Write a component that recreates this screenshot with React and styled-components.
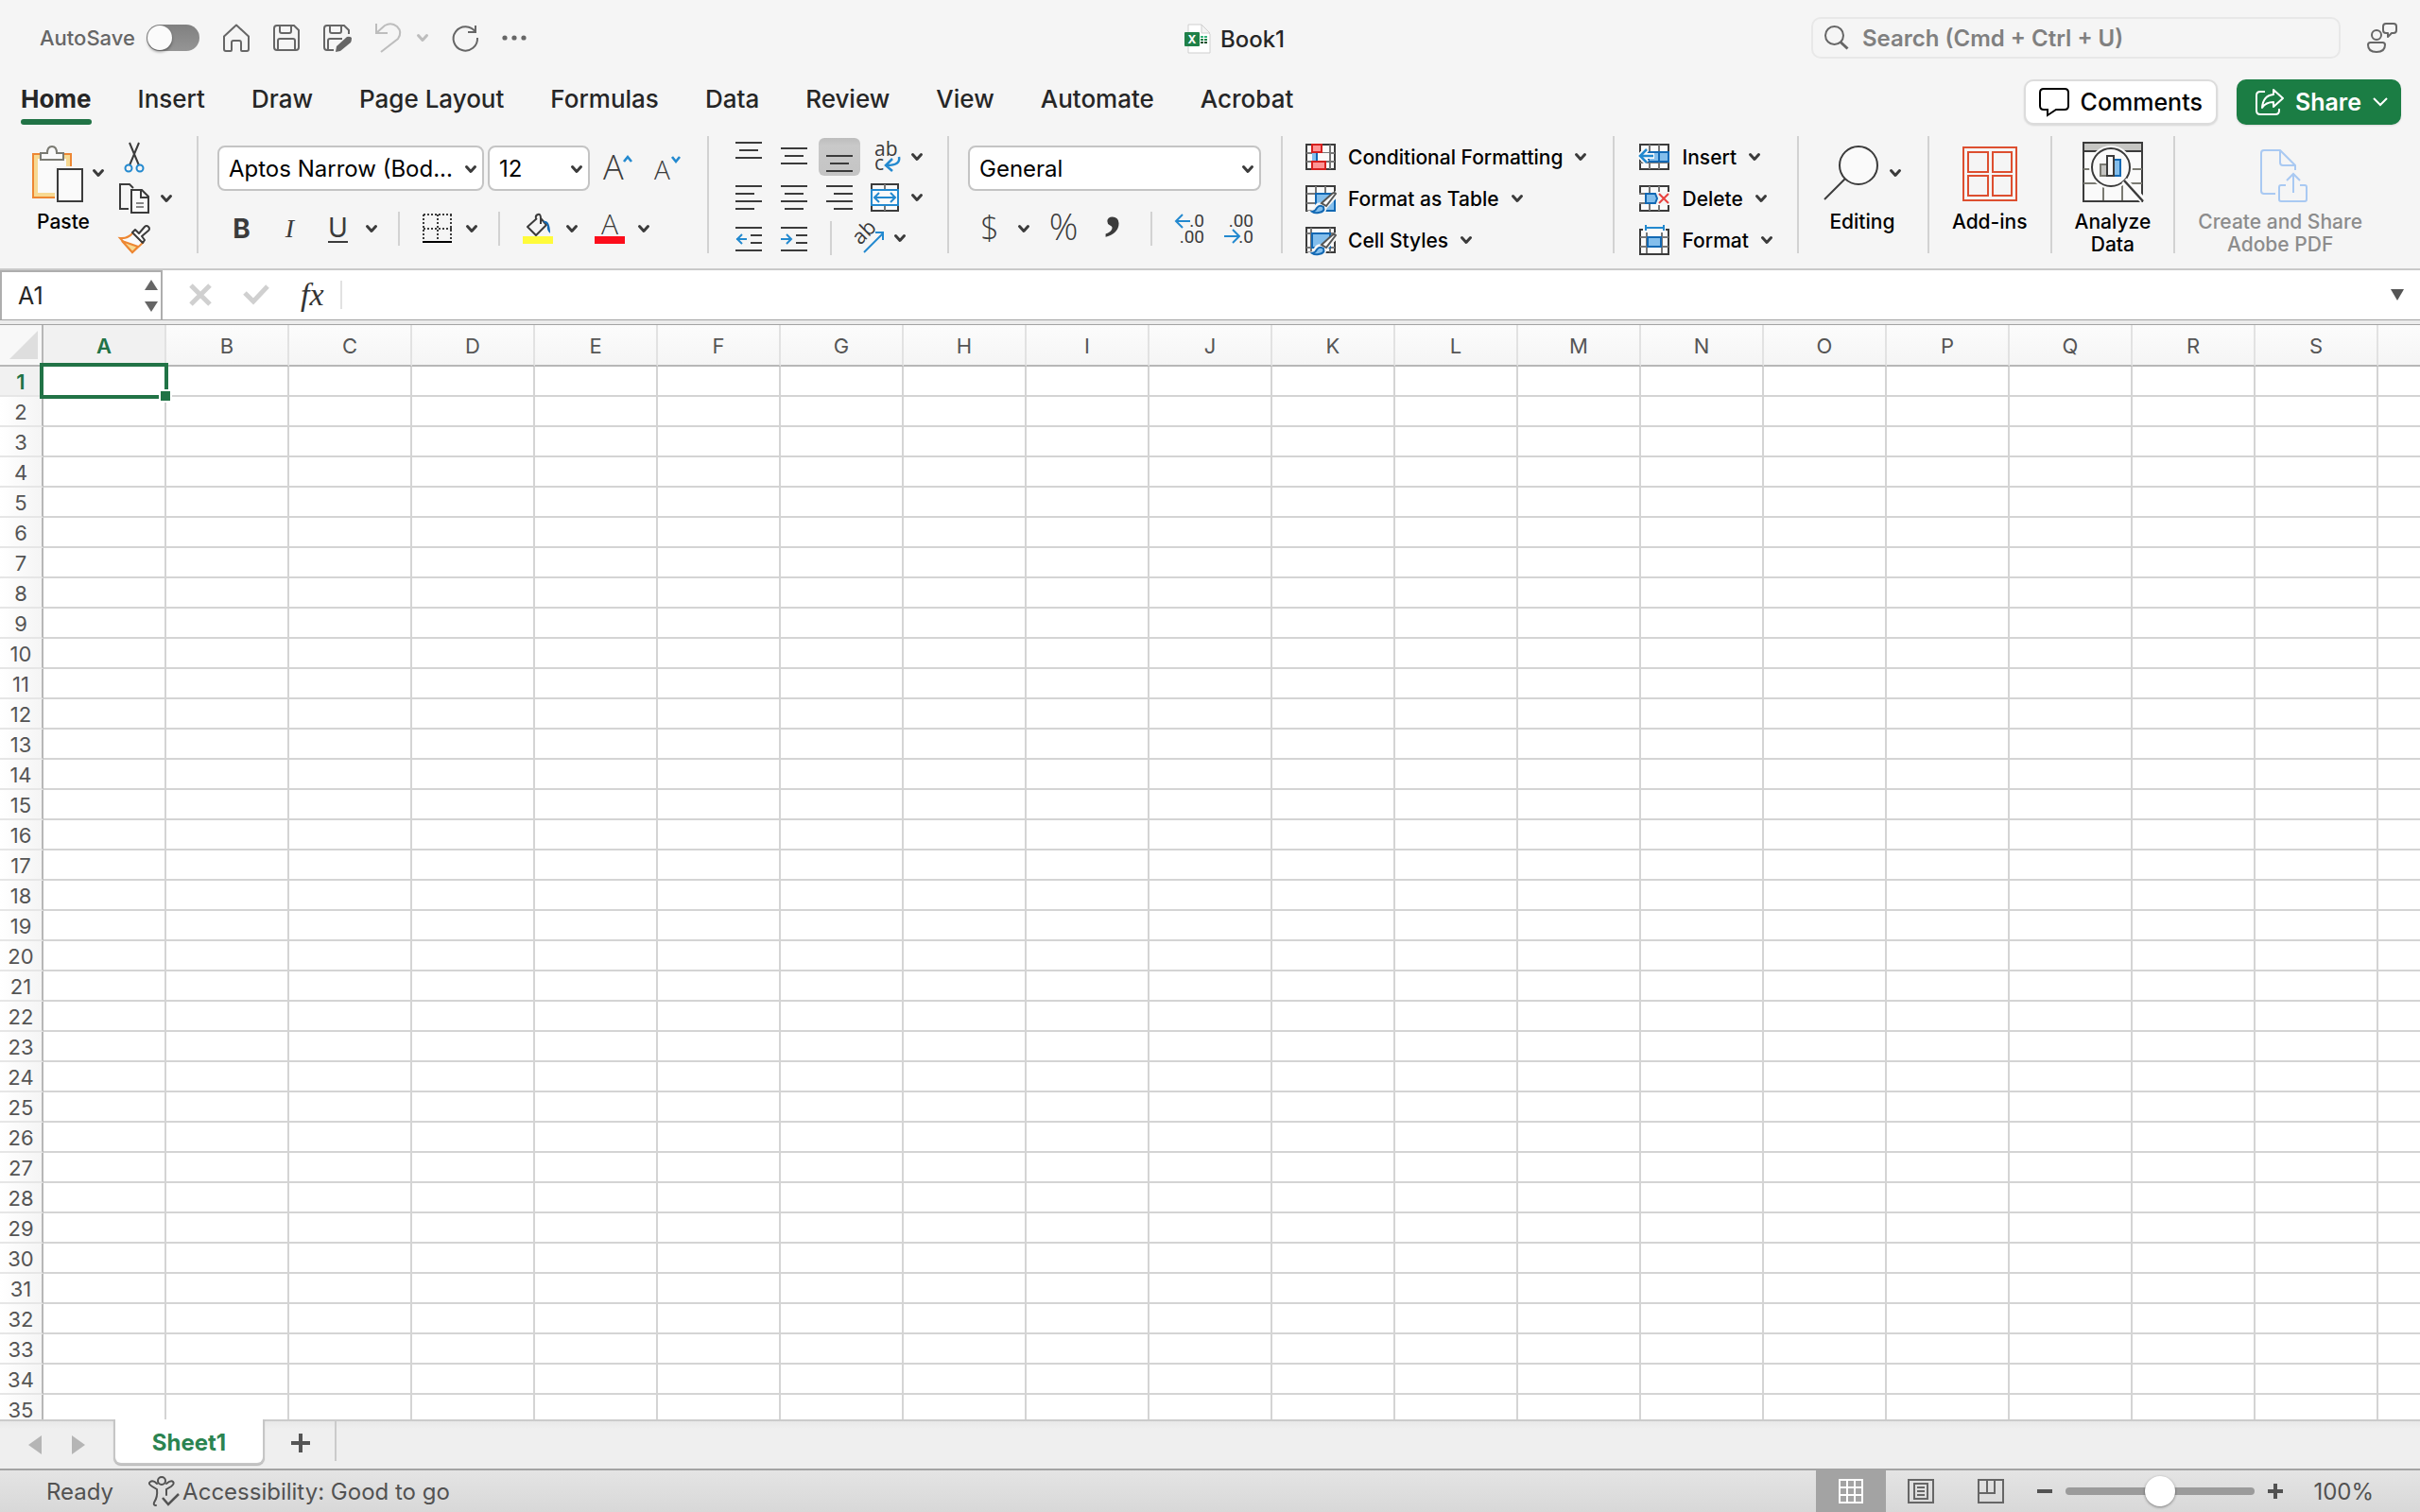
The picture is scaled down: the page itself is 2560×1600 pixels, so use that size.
import React, { useState } from 'react';
import styled, { createGlobalStyle, css } from 'styled-components';

const GlobalStyle = createGlobalStyle`
  * {
    box-sizing: border-box;
  }

  body {
    margin: 0;
    background-color: #f5f5f5;
    font-family: Inter, "Liberation Sans", sans-serif;
    color: #262626;
  }

  button, input, select {
    font-family: inherit;
    color: inherit;
  }

  svg {
    display: block;
    flex: none;
    overflow: visible;
  }
`;

const Window = styled.div`
  height: 100vh;
  display: flex;
  flex-direction: column;
  overflow: hidden;
`;

const PlainButton = styled.button`
  display: flex;
  align-items: center;
  justify-content: center;
  padding: 0;
  border: 0;
  background: none;
  white-space: nowrap;
`;

/* ---------- title bar ---------- */

const TitleBar = styled.header`
  flex: none;
  height: 80px;
  padding: 0 24px 0 42px;
  display: grid;
  grid-template-columns: 1fr auto 1fr;
  align-items: center;
`;

const QuickAccess = styled.div`
  display: flex;
  align-items: center;
  gap: 25px;
  color: #666;
`;

const AutoSave = styled.label`
  display: flex;
  align-items: center;
  gap: 12px;
  font-size: 22px;
  font-weight: 500;
`;

const Toggle = styled.input`
  appearance: none;
  width: 56px;
  height: 28px;
  margin: 0;
  border-radius: 14px;
  background: linear-gradient(#808080, #959595);
  display: flex;

  &::before {
    content: '';
    width: 26px;
    height: 26px;
    margin: 1px;
    border-radius: 50%;
    background-color: #fbfbfb;
    box-shadow: 0 2px 3px #00000060;
  }

  &:checked {
    background: #217346;
    justify-content: flex-end;
  }
`;

const UndoGroup = styled.div`
  display: flex;
  align-items: center;
  gap: 16px;
  color: #bdbdbd;
`;

const DocTitle = styled.h1`
  display: flex;
  align-items: center;
  gap: 10px;
  margin: 0;
  padding: 2px 0 0 34px;
  font-size: 24px;
  font-weight: 500;
`;

const TitleRight = styled.div`
  display: flex;
  align-items: center;
  justify-content: flex-end;
  gap: 28px;
  color: #666;
`;

const SearchBox = styled.label`
  width: 560px;
  height: 44px;
  padding: 0 12px;
  display: flex;
  align-items: center;
  gap: 14px;
  border: 2px solid #e8e8e8;
  border-radius: 10px;

  input {
    flex: 1;
    min-width: 0;
    padding: 0;
    border: 0;
    background: none;
    font-size: 24px;
    font-weight: 600;
  }

  input::placeholder {
    color: #808080;
    opacity: 1;
  }
`;

/* ---------- tabs ---------- */

const TabRow = styled.div`
  flex: none;
  height: 56px;
  padding: 0 20px 0 22px;
  display: flex;
  align-items: flex-start;
  justify-content: space-between;
`;

const Tabs = styled.nav`
  display: flex;
  gap: 49px;
`;

const Tab = styled.a`
  height: 52px;
  padding-top: 8px;
  line-height: 34px;
  font-size: 26px;
  font-weight: ${({ $active }) => ($active ? 700 : 500)};
  color: #262626;
  text-decoration: none;
  white-space: nowrap;

  &::after {
    content: '';
    display: block;
    height: 6px;
    margin-top: 4px;
    border-radius: 3px;
    background-color: ${({ $active }) => ($active ? '#217346' : 'transparent')};
  }
`;

const TabActions = styled.div`
  display: flex;
  gap: 20px;
  padding-top: 4px;
`;

const ActionButton = styled(PlainButton)`
  height: 48px;
  gap: 12px;
  padding: 0 14px;
  border-radius: 10px;
  border: 2px solid #dcdcdc;
  background-color: #fff;
  box-shadow: 0 1px 2px #00000020;
  color: #000;
  font-size: 25px;
  font-weight: 500;

  ${({ $primary }) => $primary && css`
    padding: 0 12px 0 18px;
    border-color: #1b7d44;
    background-color: #1b7d44;
    color: #fff;
    font-weight: 600;
  `}
`;

/* ---------- ribbon ---------- */

const Ribbon = styled.section`
  flex: none;
  min-height: 148px;
  padding-top: 8px;
  display: flex;
  align-items: flex-start;
  color: #3b3b3b;
`;

const Divider = styled.span`
  flex: none;
  width: 2px;
  height: 124px;
  background-color: #d2d2d2;
`;

const SmallDivider = styled(Divider)`
  height: 36px;
  margin: 0 24px 0 ${({ $left = 22 }) => $left}px;
`;

const Group = styled.div`
  flex: none;
  display: flex;
  align-items: flex-start;
  gap: 16px;
  padding: 0 ${({ $right = 26 }) => $right}px 0 ${({ $left = 24 }) => $left}px;
`;

const Stack = styled.div`
  display: flex;
  flex-direction: column;
  gap: ${({ $gap }) => $gap}px;
  padding-top: ${({ $top }) => $top}px;
`;

const Row = styled.div`
  display: flex;
  align-items: center;
  gap: ${({ $gap = 0 }) => $gap}px;
  min-height: ${({ $height = 0 }) => $height}px;
  padding-left: ${({ $inset = 0 }) => $inset}px;
`;

const Split = styled(PlainButton)`
  gap: ${({ $gap = 14 }) => $gap}px;
  justify-content: flex-start;
`;

const Tile = styled(PlainButton)`
  flex-direction: column;
  padding-top: 6px;
  font-size: 21px;
  font-weight: 500;
  line-height: 24px;
  color: ${({ disabled }) => (disabled ? '#8c8c8c' : '#000')};

  > span:first-child {
    display: flex;
    align-items: flex-end;
    height: 64px;
    margin-bottom: 9px;
  }
`;

const TileArrow = styled.span`
  display: flex;
  padding: 0 0 27px 10px;
  color: #3b3b3b;
`;

const SelectWrapper = styled.div`
  position: relative;
  width: ${({ $width }) => $width}px;

  select {
    appearance: none;
    display: block;
    width: 100%;
    height: 48px;
    padding: 0 24px 0 10px;
    border: 2px solid #c4c4c4;
    border-radius: 8px;
    background-color: #fff;
    color: #000;
    font-size: 24px;
    font-weight: 400;
  }

  svg {
    position: absolute;
    right: 8px;
    top: 21px;
    pointer-events: none;
  }
`;

const LetterButton = styled(PlainButton)`
  width: 51px;
  height: 36px;
  font-size: 28px;
  font-weight: ${({ $weight = 400 }) => $weight};
  font-style: ${({ $italic }) => ($italic ? 'italic' : 'normal')};
  font-family: ${({ $italic }) => ($italic ? '"Liberation Serif", serif' : 'inherit')};

  span {
    line-height: 28px;
    border-bottom: ${({ $underline }) => ($underline ? '2px solid #3b3b3b' : '0')};
  }
`;

const SquareButton = styled(PlainButton)`
  width: 44px;
  height: 40px;
  border-radius: 6px;
  background: ${({ $pressed }) => ($pressed ? 'linear-gradient(#bdbdbd, #c9c9c9 20%, #c4c4c4)' : 'none')};
`;

const ListButton = styled(PlainButton)`
  height: 32px;
  gap: 13px;
  justify-content: flex-start;
  font-size: 21px;
  font-weight: 500;
  color: #000;

  svg {
    color: #3b3b3b;
  }
`;

/* ---------- formula bar ---------- */

const FormulaBar = styled.div`
  flex: none;
  height: 54px;
  display: flex;
  border-top: 2px solid #c9c9c9;
  background-color: #fff;
`;

const NameBox = styled.div`
  width: 172px;
  padding: 0 3px 0 17px;
  display: flex;
  align-items: center;
  border: 2px solid #aeaeae;
  border-bottom: 0;

  input {
    flex: 1;
    min-width: 0;
    padding: 0;
    border: 0;
    font-size: 25px;
  }
`;

const Spinner = styled.div`
  display: flex;
  flex-direction: column;
  gap: 12px;
`;

const FormulaTools = styled.div`
  display: flex;
  align-items: center;
  gap: 33px;
  padding: 0 17px 0 28px;
`;

const FxButton = styled(PlainButton)`
  font: italic 400 34px "Liberation Serif", serif;
  color: #333;
`;

const FormulaInput = styled.input`
  flex: 1;
  min-width: 0;
  height: 30px;
  align-self: center;
  border: 0;
  border-left: 2px solid #e2e2e2;
  padding: 0 14px;
  font-size: 24px;
`;

const ExpandButton = styled(PlainButton)`
  width: 48px;
`;

const Splitter = styled.div`
  flex: none;
  height: 6px;
  border-top: 1px solid #a3a3a3;
  border-bottom: 1px solid #a3a3a3;
  background-color: #ececec;
`;

/* ---------- grid ---------- */

const SheetArea = styled.main`
  flex: 1;
  min-height: 0;
  overflow: hidden;
  background-color: #fff;
`;

const Sheet = styled.table`
  table-layout: fixed;
  width: 100%;
  border-spacing: 0;
  font-size: 22px;

  th, td {
    padding: 0;
  }

  td {
    height: 32px;
    border-right: 2px solid #d4d4d4;
    border-bottom: 2px solid #d4d4d4;
  }

  tr > :last-child {
    border-right: 0;
  }
`;

const Corner = styled.th`
  width: 46px;
  border-right: 2px solid #b7b7b7;
  border-bottom: 2px solid #b7b7b7;
  background-color: #f8f8f8;

  svg {
    margin: 0 0 0 10px;
  }
`;

const ColumnHeader = styled.th`
  width: ${({ $last }) => ($last ? 'auto' : '130px')};
  height: 44px;
  border-right: 2px solid #e2e2e2;
  border-bottom: 2px solid #b7b7b7;
  background: ${({ $selected }) => ($selected ? '#f1f1f1' : 'linear-gradient(#fcfcfc, #f5f5f5)')};
  color: ${({ $selected }) => ($selected ? '#217346' : '#555')};
  font-weight: ${({ $selected }) => ($selected ? 600 : 400)};

  && {
    padding-top: 2px;
  }
`;

const RowHeader = styled.th`
  height: 32px;
  border-right: 2px solid #b7b7b7;
  border-bottom: 2px solid #e6e6e6;
  background: ${({ $selected }) => ($selected ? '#f1f1f1' : 'linear-gradient(90deg, #fff, #f5f5f5)')};
  color: ${({ $selected }) => ($selected ? '#217346' : '#555')};
  font-weight: ${({ $selected }) => ($selected ? 600 : 400)};
  line-height: 26px;

  && {
    padding: 3px 0 1px;
  }
`;

const ActiveCell = styled.td`
  position: relative;
`;

const Selection = styled.span`
  position: absolute;
  inset: -4px;
  border: 4px solid #217346;

  &::after {
    content: '';
    position: absolute;
    right: -6px;
    bottom: -6px;
    width: 10px;
    height: 10px;
    background-color: #217346;
    box-shadow: 0 0 0 2px #fff;
  }
`;

/* ---------- bottom bars ---------- */

const SheetBar = styled.div`
  flex: none;
  height: 52px;
  padding-left: 28px;
  display: flex;
  align-items: flex-start;
  border-top: 2px solid #cbcbcb;
  background: linear-gradient(#e8e8e8, #efefef 8px);
`;

const SheetArrows = styled.div`
  display: flex;
  gap: 30px;
  padding: 15px 30px 0 0;
`;

const SheetTab = styled(PlainButton)`
  width: 160px;
  height: 48px;
  margin-top: -2px;
  padding-top: 3px;
  border: 2px solid #c6c6c6;
  border-top: 0;
  border-radius: 0 0 8px 8px;
  background-color: #fff;
  box-shadow: 0 1px 1px #00000040;
  color: #2b8451;
  font-size: 24px;
  font-weight: 700;
`;

const AddSheet = styled(PlainButton)`
  width: 76px;
  height: 42px;
  padding: 4px 0 0 2px;
  border-right: 2px solid #cbcbcb;
  color: #555;
`;

const StatusBar = styled.footer`
  flex: none;
  height: 46px;
  padding: 0 49px;
  display: flex;
  align-items: stretch;
  border-top: 2px solid #a3a3a3;
  background: linear-gradient(#e4e4e4, #d8d8d8);
  color: #525252;
  font-size: 24px;
`;

const StatusText = styled.span`
  display: flex;
  align-items: center;
  gap: 3px;
  margin-right: 38px;

  &:last-child {
    margin-right: 0;
  }
`;

const ViewButton = styled(PlainButton)`
  width: 74px;
  background-color: ${({ $active }) => ($active ? '#a3a3a3' : 'transparent')};
  color: #666;
`;

const StatusRight = styled.div`
  display: flex;
  align-items: stretch;
  margin-left: auto;
`;

const Zoom = styled.div`
  display: flex;
  align-items: center;
  gap: 14px;
  padding: 0 32px 0 12px;
`;

const ZoomSlider = styled.input`
  appearance: none;
  width: 200px;
  height: 8px;
  margin: 0;
  border-radius: 4px;
  background-color: #9b9b9b;

  &::-webkit-slider-thumb {
    appearance: none;
    width: 32px;
    height: 32px;
    border-radius: 50%;
    background-color: #fff;
    box-shadow: 0 1px 3px #00000070;
  }
`;

/* ---------- icons ---------- */

const Icon = ({ w = 32, h = 32, children, ...rest }) => (
  <svg width={w} height={h} viewBox={`0 0 ${w} ${h}`} fill="none" stroke="currentColor" strokeWidth="2" aria-hidden="true" {...rest}>
    {children}
  </svg>
);

const Chevron = () => (
  <Icon w={12} h={8} strokeWidth="3" strokeLinecap="round" strokeLinejoin="round">
    <path d="M1.5 1.5 6 6.5 10.5 1.5" />
  </Icon>
);

const HomeIcon = () => (
  <Icon w={28} h={30}>
    <path d="M1 13.5 14 1.5 27 13.5V27q0 2-2 2h-5q-1 0-1-1v-8q0-2-2-2h-6q-2 0-2 2v8q0 1-1 1H3q-2 0-2-2z" strokeLinejoin="round" />
  </Icon>
);

const SaveIcon = () => (
  <Icon w={28} h={28}>
    <path d="M4 1h18l5 5v18q0 3-3 3H4q-3 0-3-3V4q0-3 3-3zM7 1v6q0 2 2 2h8q2 0 2-2V1M5 27V17q0-2 2-2h14q2 0 2 2v10" />
  </Icon>
);

const SaveAsIcon = () => (
  <Icon w={30} h={30}>
    <path d="M11 28H4q-3 0-3-3V5q0-3 3-3h18l5 5v4M7 2v6q0 2 2 2h8q2 0 2-2V2M5 28V18q0-2 2-2h13" />
    <path d="M13 30l1-6L25 14q3-1 5 1 0 3-1 5L18 29z" fill="currentColor" stroke="none" />
  </Icon>
);

const UndoIcon = () => (
  <Icon w={28} h={32}>
    <path d="M1 1v10h12M1 11 10 3q7-4 13 1 6 6 1 13L6 31" />
  </Icon>
);

const RedoIcon = () => (
  <Icon w={28} h={28}>
    <path d="M25 1v7h-8M25 8A12.7 12.7 0 1 0 27 14" />
  </Icon>
);

const DotsIcon = () => (
  <Icon w={26} h={6} fill="currentColor" stroke="none">
    <circle cx="3" cy="3" r="2.6" /><circle cx="13" cy="3" r="2.6" /><circle cx="23" cy="3" r="2.6" />
  </Icon>
);

const BookIcon = () => (
  <Icon w={28} h={32} stroke="none">
    <path d="M4 1h14l9 10v20H4z" fill="#fff" stroke="#cfcfcf" strokeWidth="1" />
    <path d="M18 1v9h9z" fill="#f3f3f3" stroke="#cfcfcf" strokeWidth="1" />
    <rect y="9" width="16" height="15" rx="1" fill="#1f8048" />
    <text x="8" y="21" textAnchor="middle" fontSize="12" fontWeight="700" fill="#fff">X</text>
    <path d="M17 13h3v2h-3zM21 13h3v2h-3z" fill="#33b27a" />
    <path d="M17 16h3v2h-3zM21 16h3v2h-3z" fill="#1f8048" />
    <path d="M17 19h3v2h-3zM21 19h3v2h-3z" fill="#15522f" />
  </Icon>
);

const SearchIcon = () => (
  <Icon w={26} h={26}><circle cx="10.5" cy="10.5" r="9.5" /><path d="M17 17.500l7.500 7" strokeWidth="3" /></Icon>
);

const PersonIcon = () => (
  <Icon w={32} h={32}>
    <circle cx="10" cy="13" r="5" />
    <path d="M3.500 21h13q2.500 0 2.500 2.500 0 7.500-9 7.500t-9-7.500q0-2.500 2.500-2.500zM20 1h8q3 0 3 3v4q0 3-3 3h-2l-4 4v-4h-2q-3 0-3-3V4q0-3 3-3z" strokeLinejoin="round" />
  </Icon>
);

const CommentIcon = () => (
  <Icon w={32} h={30}>
    <path d="M5 1h22q4 0 4 4v14q0 4-4 4h-9l-9 6v-6H5q-4 0-4-4V5q0-4 4-4z" />
  </Icon>
);

const ShareIcon = () => (
  <Icon w={30} h={28}>
    <path d="M10 3H5Q1 3 1 7v16q0 4 4 4h16q4 0 4-4v-2" />
    <path d="M19 1l10 9-10 9v-5q-8 0-12 6Q8 7 19 6z" strokeLinejoin="round" />
  </Icon>
);

const PasteIcon = () => (
  <Icon w={54} h={60}>
    <rect x="1" y="9" width="40" height="46" fill="#f7d992" stroke="#ed8733" />
    <path d="M6 14h30v36H6z" fill="#fafafa" stroke="none" />
    <path d="M24 22h22v36H24z" fill="#f5f5f5" stroke="none" />
    <path d="M9 15V8h7q0-7 5-7t5 7h7v7z" fill="#fafafa" stroke="#7a7a72" />
    <rect x="27" y="25" width="26" height="34" fill="#fafafa" stroke="#3b3b3b" />
  </Icon>
);

const CutIcon = () => (
  <Icon>
    <path d="M11 1 21 25M21 1 11 25" />
    <circle cx="10" cy="28" r="3.500" stroke="#2389cf" /><circle cx="22" cy="28" r="3.500" stroke="#2389cf" />
  </Icon>
);

const CopyIcon = () => (
  <Icon>
    <path d="M10 27H1V1h10l4 4" />
    <path d="M13 7h11l7 7v17H13zM23 7v8h8" fill="#fafafa" />
    <path d="M18 21h8M18 25h8" stroke="#888" />
  </Icon>
);

const BrushIcon = () => (
  <Icon>
    <path d="M15 8Q9 15 1 14l13 15 11-10z" fill="#fafafa" stroke="#ed8733" />
    <path d="M3 17l17 6-6 6z" fill="#f7d992" stroke="#ed8733" />
    <path d="M14 8l3-3 4 4 6-7q2-2 4 0t0 4l-7 6 3 4-2 3z" fill="#fafafa" strokeLinejoin="round" />
  </Icon>
);

const GrowIcon = () => (
  <Icon w={32} h={32}>
    <text x="-2" y="28" fontSize="36" fontWeight="300" fontFamily="Open Sans, sans-serif" fill="currentColor" stroke="none">A</text>
    <path d="M20 9l4-5 4 5" stroke="#2389cf" strokeWidth="2.600" />
  </Icon>
);

const ShrinkIcon = () => (
  <Icon w={28} h={32}>
    <text x="-2" y="28" fontSize="28" fontWeight="300" fontFamily="Open Sans, sans-serif" fill="currentColor" stroke="none">A</text>
    <path d="M17 4l4 5 4-5" stroke="#2389cf" strokeWidth="2.600" />
  </Icon>
);

const BorderIcon = () => (
  <Icon>
    <path d="M1 1h30M1 16h30M1 1v28M16 1v28M30 1v28" strokeDasharray="2 2" />
    <path d="M0 30h31" stroke="#000" />
  </Icon>
);

const FillIcon = () => (
  <Icon>
    <path d="M15 5 5 14l9 9 11-11-6-7q0-5-3-4t-2 4M19 5v6" strokeLinejoin="round" />
    <path d="M21 8q8-2 8 13-4-3-3-9z" fill="#1268b3" stroke="none" />
    <path d="M0 24h32v8H0z" fill="#fffb3a" stroke="none" />
  </Icon>
);

const FontColorIcon = () => (
  <Icon>
    <text x="16" y="22" textAnchor="middle" fontSize="30" fontWeight="300" fontFamily="Open Sans, sans-serif" fill="currentColor" stroke="none">A</text>
    <path d="M0 24h32v8H0z" fill="#fc0d1b" stroke="none" />
  </Icon>
);

const lines = {
  top: [[0, 28, 1], [4, 24, 9], [0, 28, 17]],
  middle: [[0, 28, 7], [4, 24, 15], [0, 28, 23]],
  bottom: [[0, 28, 15], [4, 24, 23], [0, 28, 31]],
  left: [[0, 28, 4], [0, 20, 12], [0, 28, 20], [0, 20, 28]],
  center: [[0, 28, 4], [4, 24, 12], [0, 28, 20], [4, 24, 28]],
  right: [[0, 28, 4], [8, 28, 12], [0, 28, 20], [8, 28, 28]],
  indent: [[0, 28, 5], [16, 28, 13], [16, 28, 21], [0, 28, 29]],
};

const LinesIcon = ({ kind, children }) => (
  <Icon w={28} h={32}>
    {lines[kind].map(([from, to, y]) => <path key={y} d={`M${from} ${y}H${to}`} />)}
    {children}
  </Icon>
);

const WrapIcon = () => (
  <Icon>
    <text fontSize="21" fontFamily="Open Sans, sans-serif" fill="currentColor" stroke="none">
      <tspan x="3" y="15">ab</tspan>
      <tspan x="3" y="30">c</tspan>
    </text>
    <path d="M29 16q2 9-13 9M22 18l-7 7 7 6" stroke="#2389cf" strokeWidth="2.500" />
  </Icon>
);

const MergeIcon = () => (
  <Icon>
    <path d="M0 2h28v28H0z" fill="#fafafa" />
    <path d="M14 2v28" stroke="#777" />
    <path d="M0 8h28v16H0z" fill="#fafafa" stroke="#2389cf" />
    <path d="M4 16h20M8 11l-5 5 5 5M20 11l5 5-5 5" stroke="#2389cf" />
  </Icon>
);

const OrientationIcon = () => (
  <Icon>
    <text x="6" y="24" fontSize="22" fontFamily="Open Sans, sans-serif" fill="currentColor" stroke="none" transform="rotate(-45 6 24)">ab</text>
    <path d="M10 31 30 11M22 10h8v8" stroke="#2389cf" />
  </Icon>
);

const SymbolIcon = ({ size, y = 28, font = 'Open Sans', weight = 300, children }) => (
  <Icon>
    <text x="16" y={y} textAnchor="middle" fontSize={size} fontWeight={weight} fontFamily={`${font}, sans-serif`} fill="currentColor" stroke="none">{children}</text>
  </Icon>
);

const DecimalIcon = ({ more }) => (
  <Icon>
    <text fontSize="19" fontFamily="Roboto, sans-serif" fill="currentColor" stroke="none" textAnchor="end">
      <tspan x="31" y="14">{more ? '.0' : '.00'}</tspan>
      <tspan x="31" y="31">{more ? '.00' : '.0'}</tspan>
    </text>
    {more
      ? <path d="M1 8h15M8 1 1 8l7 7" stroke="#2389cf" />
      : <path d="M0 24h15M9 17l7 7-7 7" stroke="#2389cf" />}
  </Icon>
);

const BrushOverlay = () => (
  <g>
    <path d="M32 8 18 20q-6-1-8 4-1 4-4 4 6 4 12 1 3-2 3-5L34 10z" fill="#f5f5f5" stroke="#f5f5f5" strokeWidth="3" />
    <path d="M17 19 28 9q3-2 4 0L22 22z" fill="#fafafa" stroke="#555" />
    <path d="M7 28q4-1 5-4 3-4 7-1 2 5-5 6-4 1-7-1z" fill="#83beec" stroke="#1268b3" />
  </g>
);

const ConditionalIcon = () => (
  <Icon h={28}>
    <path d="M1 1h30v26H1z" fill="#fafafa" />
    <path d="M1 10h30M1 19h30M26 1v26" stroke="#777" />
    <path d="M13 10h12v8H13z" fill="#fafafa" stroke="none" />
    <path d="M7 10h5v8H7z" fill="#83beec" stroke="none" />
    <path d="M12 10v8" stroke="#1268b3" />
    <path d="M7 1h10v8H7zM7 19h14v8H7z" fill="#ff9494" stroke="#d6201f" />
  </Icon>
);

const TableIcon = () => (
  <Icon h={28}>
    <path d="M1 1h30v26H1z" fill="#fafafa" />
    <path d="M1 9h30M1 19h10M11 1v26M21 1v8" stroke="#777" />
    <path d="M11 9h20v18H11z" fill="#83beec" stroke="#1268b3" />
    <path d="M31 0v9" />
    <BrushOverlay />
  </Icon>
);

const CellStylesIcon = () => (
  <Icon h={28}>
    <path d="M1 1h30v26H1z" fill="#fafafa" />
    <path d="M1 7h30M6 1v26M26 1v26M1 22h30" stroke="#777" />
    <path d="M7 7h19v15H7z" fill="#83beec" stroke="#1268b3" />
    <BrushOverlay />
  </Icon>
);

const InsertIcon = () => (
  <Icon h={28}>
    <path d="M1 1h30v26H1z" fill="#fafafa" />
    <path d="M1 9h30M1 20h30M11 1v26M21 1v26" stroke="#777" />
    <path d="M10 9h21v10H10z" fill="#83beec" stroke="#1268b3" />
    <path d="M21 9v10" stroke="#1268b3" />
    <path d="M1 13h15M8 6l-7 7 7 7" stroke="#fafafa" strokeWidth="6" />
    <path d="M1 13h14M8 6l-7 7 7 7" stroke="#2389cf" strokeWidth="2.500" />
  </Icon>
);

const DeleteIcon = () => (
  <Icon h={28}>
    <path d="M1 9V1h30v6M1 19v8h30v-6" fill="#fafafa" />
    <path d="M0 9h10M0 19h10M11 1v26M21 1v6M21 21v6" stroke="#777" />
    <path d="M7 9h10l2 5-2 5H7z" fill="#83beec" stroke="#1268b3" />
    <path d="M21 9l10 10M31 9 21 19" stroke="#e8413f" />
  </Icon>
);

const FormatIcon = () => (
  <Icon h={32}>
    <path d="M4 5H1v26h30V5h-3" fill="#fafafa" />
    <path d="M1 13h30M1 23h30M8 8v22M24 8v22" stroke="#777" />
    <path d="M9 13h14v10H9z" fill="#83beec" stroke="#1268b3" />
    <path d="M7 0v6M26 0v6M7 3h19" stroke="#2389cf" />
  </Icon>
);

const EditingIcon = () => (
  <Icon w={60} h={60} stroke="#3b3b3b"><circle cx="37" cy="21" r="20" fill="#fafafa" /><path d="M23 35 1 57" /></Icon>
);

const AddinsIcon = () => (
  <Icon w={58} h={60} stroke="#dd4f30">
    <path d="M1 2h56v56H1zM6 7h21v21H6zM32 7h20v21H32zM6 32h21v21H6zM32 32h20v21H32z" />
  </Icon>
);

const AnalyzeIcon = () => (
  <Icon w={64} h={64} stroke="#3b3b3b">
    <path d="M1 1h62v62H1z" fill="#fafafa" />
    <path d="M2 2h60v8H2z" fill="#c6c6c3" stroke="none" />
    <path d="M1 10h62" />
    <path d="M1 29h62M1 44h62M22 44v18M42 44v18" stroke="#7a7a72" />
    <circle cx="30" cy="27" r="23" fill="#fafafa" stroke="none" />
    <circle cx="30" cy="27" r="20" fill="#fafafa" />
    <path d="M19 24h8v12h-8z" fill="#c6c6c3" stroke="#7a7a72" />
    <path d="M33 19h7v17h-7z" fill="#83beec" stroke="#1268b3" />
    <path d="M26 15h7v21h-7z" fill="#fafafa" />
    <path d="M44 41l20 21" stroke="#fafafa" strokeWidth="7" />
    <path d="M44 41l20 22" strokeWidth="2.500" />
  </Icon>
);

const PdfIcon = () => (
  <Icon w={52} h={56} stroke="#a9c9f2">
    <path d="M21 47H9q-3 0-3-3V4q0-3 3-3h17l16 16v5M26 1v13q0 3 3 3h13" strokeLinejoin="round" />
    <path d="M32 38h-5q-2 0-2 2v13q0 2 2 2h25q2 0 2-2V40q0-2-2-2h-5M40 46V27M33 33l7-7 7 7" />
  </Icon>
);

const Triangle = ({ d, w, h, color }) => (
  <Icon w={w} h={h} stroke="none" fill={color}><path d={d} /></Icon>
);

const PlusIcon = ({ size }) => (
  <Icon w={size} h={size} strokeWidth="4"><path d={`M0 ${size / 2}h${size}M${size / 2} 0v${size}`} /></Icon>
);

const AccessibilityIcon = () => (
  <Icon>
    <circle cx="13" cy="5" r="4" />
    <path d="M8 8Q4 4 1 6t2 5l5 3q1 8-3 14-1 3 2 3M18 8q5-4 7-2t-2 5l-5 3v6" strokeLinecap="round" />
    <path d="M14 23l6 7 11-11" strokeWidth="2.500" />
  </Icon>
);

const GridViewIcon = () => (
  <Icon w={26} h={26} stroke="#fff"><path d="M1 1h24v24H1zM1 9h24M1 17h24M9 1v24M17 1v24" /></Icon>
);

const PageViewIcon = () => (
  <Icon w={28} h={26}><path d="M1 1h26v24H1zM7 5h14v16H7zM10 9h8M10 13h8M10 17h8" /></Icon>
);

const BreakViewIcon = () => (
  <Icon w={28} h={26}><path d="M1 1h26v24H1zM1 15h17V1M10 1v14" /></Icon>
);

/* ---------- page ---------- */

const tabs = ['Home', 'Insert', 'Draw', 'Page Layout', 'Formulas', 'Data', 'Review', 'View', 'Automate', 'Acrobat'];
const columns = 'ABCDEFGHIJKLMNOPQRS'.split('');
const rows = Array.from({ length: 35 }, (_, i) => i + 1);

const Select = ({ label, width, options }) => (
  <SelectWrapper $width={width}>
    <select aria-label={label}>
      {options.map((o) => <option key={o}>{o}</option>)}
    </select>
    <Chevron />
  </SelectWrapper>
);

const SplitButton = ({ label, gap, children }) => (
  <Split aria-label={label} $gap={gap}>{children}<Chevron /></Split>
);

const RibbonBar = () => (
  <Ribbon>
    <Group>
      <Tile>
        <span><Icon w={10} h={1} /><PasteIcon /><TileArrow><Chevron /></TileArrow></span>
        <span>Paste</span>
      </Tile>
      <Stack $top={6} $gap={12}>
        <Split aria-label="Cut"><CutIcon /></Split>
        <SplitButton label="Copy" gap={12}><CopyIcon /></SplitButton>
        <Split aria-label="Format Painter"><BrushIcon /></Split>
      </Stack>
    </Group>
    <Divider />
    <Group $left={20}>
      <Stack $top={10} $gap={22}>
        <Row $gap={4}>
          <Select label="Font" width={282} options={['Aptos Narrow (Bod...']} />
          <Select label="Font size" width={108} options={['12']} />
          <Row $gap={22} $inset={12}>
            <PlainButton aria-label="Increase font size"><GrowIcon /></PlainButton>
            <PlainButton aria-label="Decrease font size"><ShrinkIcon /></PlainButton>
          </Row>
        </Row>
        <Row $height={36}>
          <LetterButton $weight={700}><span>B</span></LetterButton>
          <LetterButton $italic><span>I</span></LetterButton>
          <LetterButton $underline><span>U</span></LetterButton>
          <SplitButton label="Underline style" gap={4}><span /></SplitButton>
          <SmallDivider />
          <SplitButton label="Borders"><BorderIcon /></SplitButton>
          <SmallDivider />
          <Row $gap={18}>
            <SplitButton label="Fill color"><FillIcon /></SplitButton>
            <SplitButton label="Font color"><FontColorIcon /></SplitButton>
          </Row>
        </Row>
      </Stack>
    </Group>
    <Divider />
    <Group $left={20}>
      <Stack $top={2} $gap={3}>
        <Row $gap={4}>
          <SquareButton aria-label="Top align"><LinesIcon kind="top" /></SquareButton>
          <SquareButton aria-label="Middle align"><LinesIcon kind="middle" /></SquareButton>
          <SquareButton aria-label="Bottom align" $pressed><LinesIcon kind="bottom" /></SquareButton>
          <Row $inset={8}><SplitButton label="Wrap text" gap={10}><WrapIcon /></SplitButton></Row>
        </Row>
        <Row $gap={4}>
          <SquareButton aria-label="Align left"><LinesIcon kind="left" /></SquareButton>
          <SquareButton aria-label="Center"><LinesIcon kind="center" /></SquareButton>
          <SquareButton aria-label="Align right"><LinesIcon kind="right" /></SquareButton>
          <Row $inset={8}><SplitButton label="Merge and center" gap={10}><MergeIcon /></SplitButton></Row>
        </Row>
        <Row $gap={4}>
          <SquareButton aria-label="Decrease indent">
            <LinesIcon kind="indent"><path d="M1 17h11M7 12l-5 5 5 5" stroke="#2389cf" /></LinesIcon>
          </SquareButton>
          <SquareButton aria-label="Increase indent">
            <LinesIcon kind="indent"><path d="M0 17h11M6 12l5 5-5 5" stroke="#2389cf" /></LinesIcon>
          </SquareButton>
          <Row>
            <SmallDivider $left={12} />
            <SplitButton label="Orientation" gap={10}><OrientationIcon /></SplitButton>
          </Row>
        </Row>
      </Stack>
    </Group>
    <Divider />
    <Group $left={20} $right={21}>
      <Stack $top={10} $gap={22}>
        <Select label="Number format" width={310} options={['General']} />
        <Row $height={36} $gap={20} $inset={7}>
          <SplitButton label="Currency"><SymbolIcon size={34}>$</SymbolIcon></SplitButton>
          <PlainButton aria-label="Percent"><SymbolIcon size={38}>%</SymbolIcon></PlainButton>
          <PlainButton aria-label="Comma style"><SymbolIcon size={70} y={50} font="Liberation Serif" weight={700}>’</SymbolIcon></PlainButton>
          <Row>
            <SmallDivider $left={4} />
            <Row $gap={20}>
              <PlainButton aria-label="Increase decimal"><DecimalIcon more /></PlainButton>
              <PlainButton aria-label="Decrease decimal"><DecimalIcon /></PlainButton>
            </Row>
          </Row>
        </Row>
      </Stack>
    </Group>
    <Divider />
    <Group $right={28}>
      <Stack $top={6} $gap={12}>
        <ListButton><ConditionalIcon />Conditional Formatting<Chevron /></ListButton>
        <ListButton><TableIcon />Format as Table<Chevron /></ListButton>
        <ListButton><CellStylesIcon />Cell Styles<Chevron /></ListButton>
      </Stack>
    </Group>
    <Divider />
    <Group $left={26}>
      <Stack $top={6} $gap={12}>
        <ListButton><InsertIcon />Insert<Chevron /></ListButton>
        <ListButton><DeleteIcon />Delete<Chevron /></ListButton>
        <ListButton><FormatIcon />Format<Chevron /></ListButton>
      </Stack>
    </Group>
    <Divider />
    <Group $left={26} $right={28}>
      <Tile>
        <span><EditingIcon /><TileArrow><Chevron /></TileArrow></span>
        <span>Editing</span>
      </Tile>
    </Group>
    <Divider />
    <Group $right={24}>
      <Tile><span><AddinsIcon /></span><span>Add-ins</span></Tile>
    </Group>
    <Divider />
    <Group $right={24}>
      <Tile><span><AnalyzeIcon /></span><span>Analyze<br />Data</span></Tile>
    </Group>
    <Divider />
    <Group>
      <Tile disabled><span><PdfIcon /></span><span>Create and Share<br />Adobe PDF</span></Tile>
    </Group>
  </Ribbon>
);

const Grid = () => (
  <Sheet>
    <thead>
      <tr>
        <Corner><Triangle w={30} h={30} d="M30 0v30H0z" color="#dedede" /></Corner>
        {columns.map((c) => <ColumnHeader key={c} scope="col" $selected={c === 'A'}>{c}</ColumnHeader>)}
        <ColumnHeader $last />
      </tr>
    </thead>
    <tbody>
      {rows.map((r) => (
        <tr key={r}>
          <RowHeader scope="row" $selected={r === 1}>{r}</RowHeader>
          {columns.map((c) => (
            r === 1 && c === 'A' ? <ActiveCell key={c}><Selection /></ActiveCell> : <td key={c} />
          ))}
          <td />
        </tr>
      ))}
    </tbody>
  </Sheet>
);

const App = () => {
  const [zoom, setZoom] = useState(100);

  return (
    <Window>
      <GlobalStyle />
      <TitleBar>
        <QuickAccess>
          <AutoSave>AutoSave<Toggle type="checkbox" role="switch" /></AutoSave>
          <PlainButton aria-label="Home"><HomeIcon /></PlainButton>
          <PlainButton aria-label="Save"><SaveIcon /></PlainButton>
          <PlainButton aria-label="Save as"><SaveAsIcon /></PlainButton>
          <UndoGroup>
            <PlainButton aria-label="Undo"><UndoIcon /></PlainButton>
            <Chevron />
          </UndoGroup>
          <PlainButton aria-label="Repeat"><RedoIcon /></PlainButton>
          <PlainButton aria-label="More"><DotsIcon /></PlainButton>
        </QuickAccess>
        <DocTitle><BookIcon />Book1</DocTitle>
        <TitleRight>
          <SearchBox>
            <SearchIcon />
            <input type="text" aria-label="Search" placeholder="Search (Cmd + Ctrl + U)" />
          </SearchBox>
          <PlainButton aria-label="Presence"><PersonIcon /></PlainButton>
        </TitleRight>
      </TitleBar>

      <TabRow>
        <Tabs>
          {tabs.map((t) => <Tab key={t} href="#" $active={t === 'Home'}>{t}</Tab>)}
        </Tabs>
        <TabActions>
          <ActionButton><CommentIcon />Comments</ActionButton>
          <ActionButton $primary>
            <ShareIcon />Share
            <Icon w={16} h={10}><path d="M1 1l7 7 7-7" /></Icon>
          </ActionButton>
        </TabActions>
      </TabRow>

      <RibbonBar />

      <FormulaBar>
        <NameBox>
          <input type="text" aria-label="Name box" defaultValue="A1" />
          <Spinner>
            <PlainButton aria-label="Previous"><Triangle w={14} h={11} d="M7 0l7 11H0z" color="#666" /></PlainButton>
            <PlainButton aria-label="Next"><Triangle w={14} h={11} d="M0 0h14L7 11z" color="#666" /></PlainButton>
          </Spinner>
        </NameBox>
        <FormulaTools>
          <PlainButton aria-label="Cancel"><Icon w={24} h={24} stroke="#d0d0d0" strokeWidth="5"><path d="M2 2l20 20M22 2 2 22" /></Icon></PlainButton>
          <PlainButton aria-label="Enter"><Icon w={28} h={24} stroke="#d0d0d0" strokeWidth="5"><path d="M2 10l9 9L26 3" /></Icon></PlainButton>
          <FxButton>fx</FxButton>
        </FormulaTools>
        <FormulaInput aria-label="Formula" />
        <ExpandButton aria-label="Expand formula bar"><Triangle w={14} h={12} d="M0 0h14L7 12z" color="#555" /></ExpandButton>
      </FormulaBar>
      <Splitter />

      <SheetArea><Grid /></SheetArea>

      <SheetBar>
        <SheetArrows>
          <PlainButton aria-label="Previous sheet"><Triangle w={16} h={20} d="M16 0v20L2 10z" color="#b5b5b5" /></PlainButton>
          <PlainButton aria-label="Next sheet"><Triangle w={16} h={20} d="M2 0v20l14-10z" color="#b5b5b5" /></PlainButton>
        </SheetArrows>
        <SheetTab>Sheet1</SheetTab>
        <AddSheet aria-label="Add sheet"><PlusIcon size={20} /></AddSheet>
      </SheetBar>

      <StatusBar>
        <StatusText>Ready</StatusText>
        <StatusText><AccessibilityIcon />Accessibility: Good to go</StatusText>
        <StatusRight>
          <ViewButton $active aria-label="Normal view"><GridViewIcon /></ViewButton>
          <ViewButton aria-label="Page layout view"><PageViewIcon /></ViewButton>
          <ViewButton aria-label="Page break view"><BreakViewIcon /></ViewButton>
          <Zoom>
            <PlainButton aria-label="Zoom out"><Icon w={16} h={4} strokeWidth="4"><path d="M0 2h16" /></Icon></PlainButton>
            <ZoomSlider type="range" min="0" max="200" aria-label="Zoom" value={zoom} onChange={(e) => setZoom(Number(e.target.value))} />
            <PlainButton aria-label="Zoom in"><PlusIcon size={16} /></PlainButton>
          </Zoom>
          <StatusText as="output">{zoom}%</StatusText>
        </StatusRight>
      </StatusBar>
    </Window>
  );
};

export default App;
